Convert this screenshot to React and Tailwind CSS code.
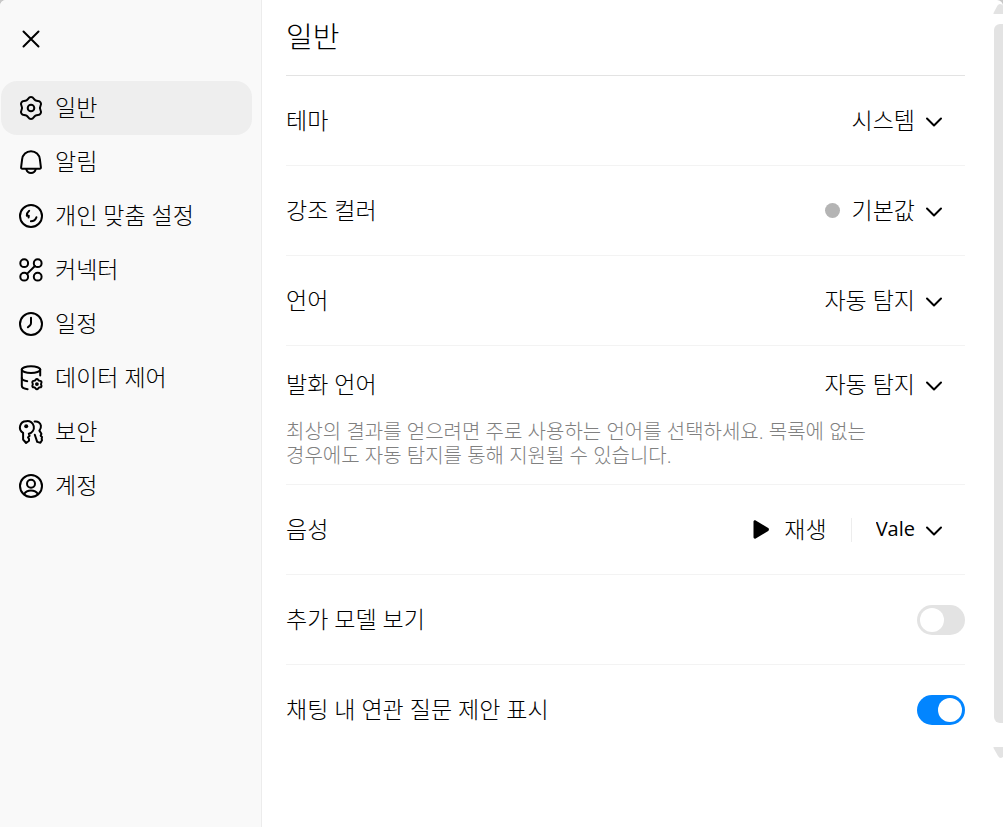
import React, { useState } from 'react';

const strokeProps = {
  viewBox: '0 0 24 24',
  fill: 'none',
  stroke: 'currentColor',
  strokeWidth: 2,
  strokeLinecap: 'round',
  strokeLinejoin: 'round',
  'aria-hidden': true,
};

const navIcon = { ...strokeProps, className: 'size-6 shrink-0 overflow-visible' };

// Six rounded lobes around (12, 12)
const GEAR =
  'M9.4 2.4A3 3 0 0 1 14.6 2.4A5.1 5.1 0 0 0 19 4.95A3 3 0 0 1 21.6 9.45A5.1 5.1 0 0 0 21.6 14.55A3 3 0 0 1 19 19.05A5.1 5.1 0 0 0 14.6 21.6A3 3 0 0 1 9.4 21.6A5.1 5.1 0 0 0 5 19.05A3 3 0 0 1 2.4 14.55A5.1 5.1 0 0 0 2.4 9.45A3 3 0 0 1 5 4.95A5.1 5.1 0 0 0 9.4 2.4z';

const GearIcon = () => (
  <svg {...navIcon}>
    <path d={GEAR} />
    <circle cx="12" cy="12" r="3.3" />
  </svg>
);

const BellIcon = () => (
  <svg {...navIcon}>
    <path d="M12 1.2c-4.800 0-8.400 3.500-8.900 8.200l-1 8c-.1.900.4 1.400 1.200 1.400h17.400c.8 0 1.300-.5 1.200-1.400l-1-8C20.400 4.700 16.800 1.200 12 1.200z" />
    <path d="M7.300 19.300c.6 2.300 2.400 3.700 4.700 3.700s4.100-1.400 4.700-3.700" />
  </svg>
);

const PersonalizationIcon = () => (
  <svg {...navIcon}>
    <circle cx="12" cy="12" r="11" />
    <path d="M10.200 6.800c-1.500 1.200-2.400 3-2.400 4.900l2 .1-.2 1.700" />
    <path d="M17.400 13.300c-.9 2.300-3 3.900-5.500 4" />
  </svg>
);

const ConnectorsIcon = () => (
  <svg {...navIcon}>
    <circle cx="5.200" cy="5.200" r="3.900" />
    <circle cx="18.700" cy="5.200" r="3.900" />
    <circle cx="5.200" cy="18.700" r="3.900" />
    <circle cx="18.700" cy="18.700" r="3.900" />
    <path d="M8 15.900 15.900 8" />
  </svg>
);

const ClockIcon = () => (
  <svg {...navIcon}>
    <circle cx="12" cy="12" r="11" />
    <path d="M12 5.800V11c0 1.200-.3 1.800-1.100 2.500l-2 1.800" />
  </svg>
);

const DataIcon = () => (
  <svg {...navIcon}>
    <ellipse cx="12" cy="3.600" rx="9.200" ry="3.400" />
    <path d="M2.800 3.600v16.200c0 1.700 2.400 3 5.800 3.400" />
    <path d="M21.200 3.600v6" />
    <path d="M2.800 12c0 1.500 2 2.700 5.400 3.200" />
    <path d={GEAR} transform="translate(12.400 12.600) scale(.46)" strokeWidth="4.3" />
    <circle cx="17.900" cy="18.100" r="1.900" fill="currentColor" stroke="none" />
  </svg>
);

const KeysIcon = () => (
  <svg {...navIcon}>
    <path d="M7.300 1.200a6.200 6.200 0 0 0-3.200 11.600v6.700l3 3.500 2.900-2.300v-1.900l-1-1.300 1.600-1.700-.8-2.100a6.200 6.200 0 0 0-2.500-12.500z" />
    <path d="M15.600 1.600c3.200-.6 5.800 1.200 6.300 4 .3 2-.3 3.400-1.500 5l2 3.200-.7 1.900 1.300 1.300-.3 1.800.3 1.400-1.600 2.500-3.200-.8-2.400-7.200" />
    <circle cx="7.200" cy="6.300" r="2" fill="currentColor" stroke="none" />
  </svg>
);

const AccountIcon = () => (
  <svg {...navIcon}>
    <circle cx="12" cy="12" r="11" />
    <circle cx="12" cy="9.800" r="4" />
    <path d="M5 20.300c1.500-2.400 4-3.700 7-3.700s5.500 1.300 7 3.700" />
  </svg>
);

const navItems = [
  { id: 'general', label: '일반', Icon: GearIcon },
  { id: 'notifications', label: '알림', Icon: BellIcon },
  { id: 'personalization', label: '개인 맞춤 설정', Icon: PersonalizationIcon },
  { id: 'connectors', label: '커넥터', Icon: ConnectorsIcon },
  { id: 'schedules', label: '일정', Icon: ClockIcon },
  { id: 'data', label: '데이터 제어', Icon: DataIcon },
  { id: 'security', label: '보안', Icon: KeysIcon },
  { id: 'account', label: '계정', Icon: AccountIcon },
];

function Row({ htmlFor, label, children }) {
  return (
    <div className="flex h-[90px] items-center justify-between border-b border-[#f3f3f3] last:border-b-0">
      <label htmlFor={htmlFor} className="pb-0.5">{label}</label>
      <div className="flex items-center">{children}</div>
    </div>
  );
}

function Select({ id, options }) {
  return (
    <div className="relative flex items-center">
      <select id={id} className="h-9 appearance-none bg-transparent pr-[50px] pb-0.5 field-sizing-content outline-none">
        {options.map((option) => (
          <option key={option}>{option}</option>
        ))}
      </select>
      <svg {...strokeProps} viewBox="0 0 18 10" className="pointer-events-none absolute right-[22px] mt-0.5 h-2.5 w-[18px]">
        <path d="m2 1.500 7 7 7-7" />
      </svg>
    </div>
  );
}

function Toggle({ id, defaultChecked }) {
  return (
    <input
      id={id}
      type="checkbox"
      role="switch"
      defaultChecked={defaultChecked}
      className="flex h-[30px] w-12 appearance-none items-center rounded-full bg-[#e3e3e3] px-[3px] before:size-6 before:rounded-full before:bg-white checked:justify-end checked:bg-[#0285ff]"
    />
  );
}

function Scrollbar() {
  return (
    <div aria-hidden="true" className="flex w-2.5 shrink-0 flex-col overflow-hidden pt-1 pb-[69px]">
      <svg viewBox="0 0 10 10" className="h-2.5 w-2.5 fill-[#e3e3e3]">
        <path d="M1 10Q0 10 .5 9L4.500 1.500Q5.500 0 7 0Q9 0 10 1.500V10z" />
      </svg>
      <div className="mt-2.5 mb-6 ml-px w-4 flex-1 rounded-md bg-[#e3e3e3]"></div>
      <svg viewBox="0 0 10 11" className="h-[11px] w-2.5 fill-[#e3e3e3]">
        <path d="M1 0Q0 0 .5 1L5 9Q6 11 8 11L10 10V0z" />
      </svg>
    </div>
  );
}

export default function App() {
  const [active, setActive] = useState('general');

  return (
    <div className="bg-[#c8c8c8]">
      <div className="flex min-h-screen overflow-hidden rounded-t-md bg-white text-[23px] leading-8 font-light text-black font-['Open_Sans','Noto_Sans_CJK_KR',sans-serif]">
        {/* Sidebar */}
        <aside className="w-[262px] shrink-0 border-r border-[#ececec] bg-[#f9f9f9] pt-[21px] pr-[9px] pl-px">
          <button type="button" aria-label="닫기" className="ml-3 flex size-9 items-center justify-center">
            <svg {...strokeProps} viewBox="0 0 18 18" className="size-[18px]">
              <path d="m1.500 1.500 15 15M16.500 1.500l-15 15" />
            </svg>
          </button>

          <nav className="mt-6 flex flex-col">
            {navItems.map(({ id, label, Icon }) => (
              <button
                key={id}
                type="button"
                onClick={() => setActive(id)}
                className={`flex h-[54px] items-center gap-3 rounded-2xl px-[18px] ${active === id ? 'bg-[#eeeeee]' : ''}`}
              >
                <Icon />
                <span className="pb-0.5">{label}</span>
              </button>
            ))}
          </nav>
        </aside>

        {/* Settings */}
        <main className="min-w-0 flex-1 pr-7 pl-6">
          <h1 className="flex h-[76px] items-center border-b border-[#e3e3e3] pb-0.5 text-[29px]">일반</h1>

          <Row htmlFor="theme" label="테마">
            <Select id="theme" options={['시스템', '라이트', '다크']} />
          </Row>
          <Row htmlFor="accent" label="강조 컬러">
            <span className="mr-3 size-[15px] rounded-full bg-[#b4b4b4]"></span>
            <Select id="accent" options={['기본값', '파랑', '초록']} />
          </Row>
          <Row htmlFor="language" label="언어">
            <Select id="language" options={['자동 탐지', '한국어', 'English']} />
          </Row>

          <div className="border-b border-[#f3f3f3] pt-[21px] pb-4">
            <div className="flex items-center justify-between">
              <label htmlFor="spoken" className="pb-0.5">발화 언어</label>
              <Select id="spoken" options={['자동 탐지', '한국어', 'English']} />
            </div>
            <p className="mt-[17px] max-w-[590px] text-[20px] leading-6 text-[#808080]">
              최상의 결과를 얻으려면 주로 사용하는 언어를 선택하세요. 목록에 없는 경우에도 자동 탐지를 통해 지원될 수 있습니다.
            </p>
          </div>

          <Row htmlFor="voice" label="음성">
            <button type="button" className="flex items-center gap-3.5">
              <svg viewBox="0 0 17 19" aria-hidden="true" className="h-[19px] w-[17px] fill-current">
                <path d="M.500 1.700C.500.500 1.700-.1 2.700.500l12.500 7.600c1 .6 1 2.200 0 2.800L2.700 18.500c-1 .6-2.200 0-2.200-1.200z" />
              </svg>
              <span className="pb-0.5">재생</span>
            </button>
            <span className="mx-6 h-6 w-px bg-[#ededed]"></span>
            <div className="text-[20px] font-normal">
              <Select id="voice" options={['Vale', 'Cove', 'Ember']} />
            </div>
          </Row>
          <Row htmlFor="models" label="추가 모델 보기">
            <Toggle id="models" />
          </Row>
          <Row htmlFor="suggestions" label="채팅 내 연관 질문 제안 표시">
            <Toggle id="suggestions" defaultChecked />
          </Row>
        </main>

        <Scrollbar />
      </div>
    </div>
  );
}
